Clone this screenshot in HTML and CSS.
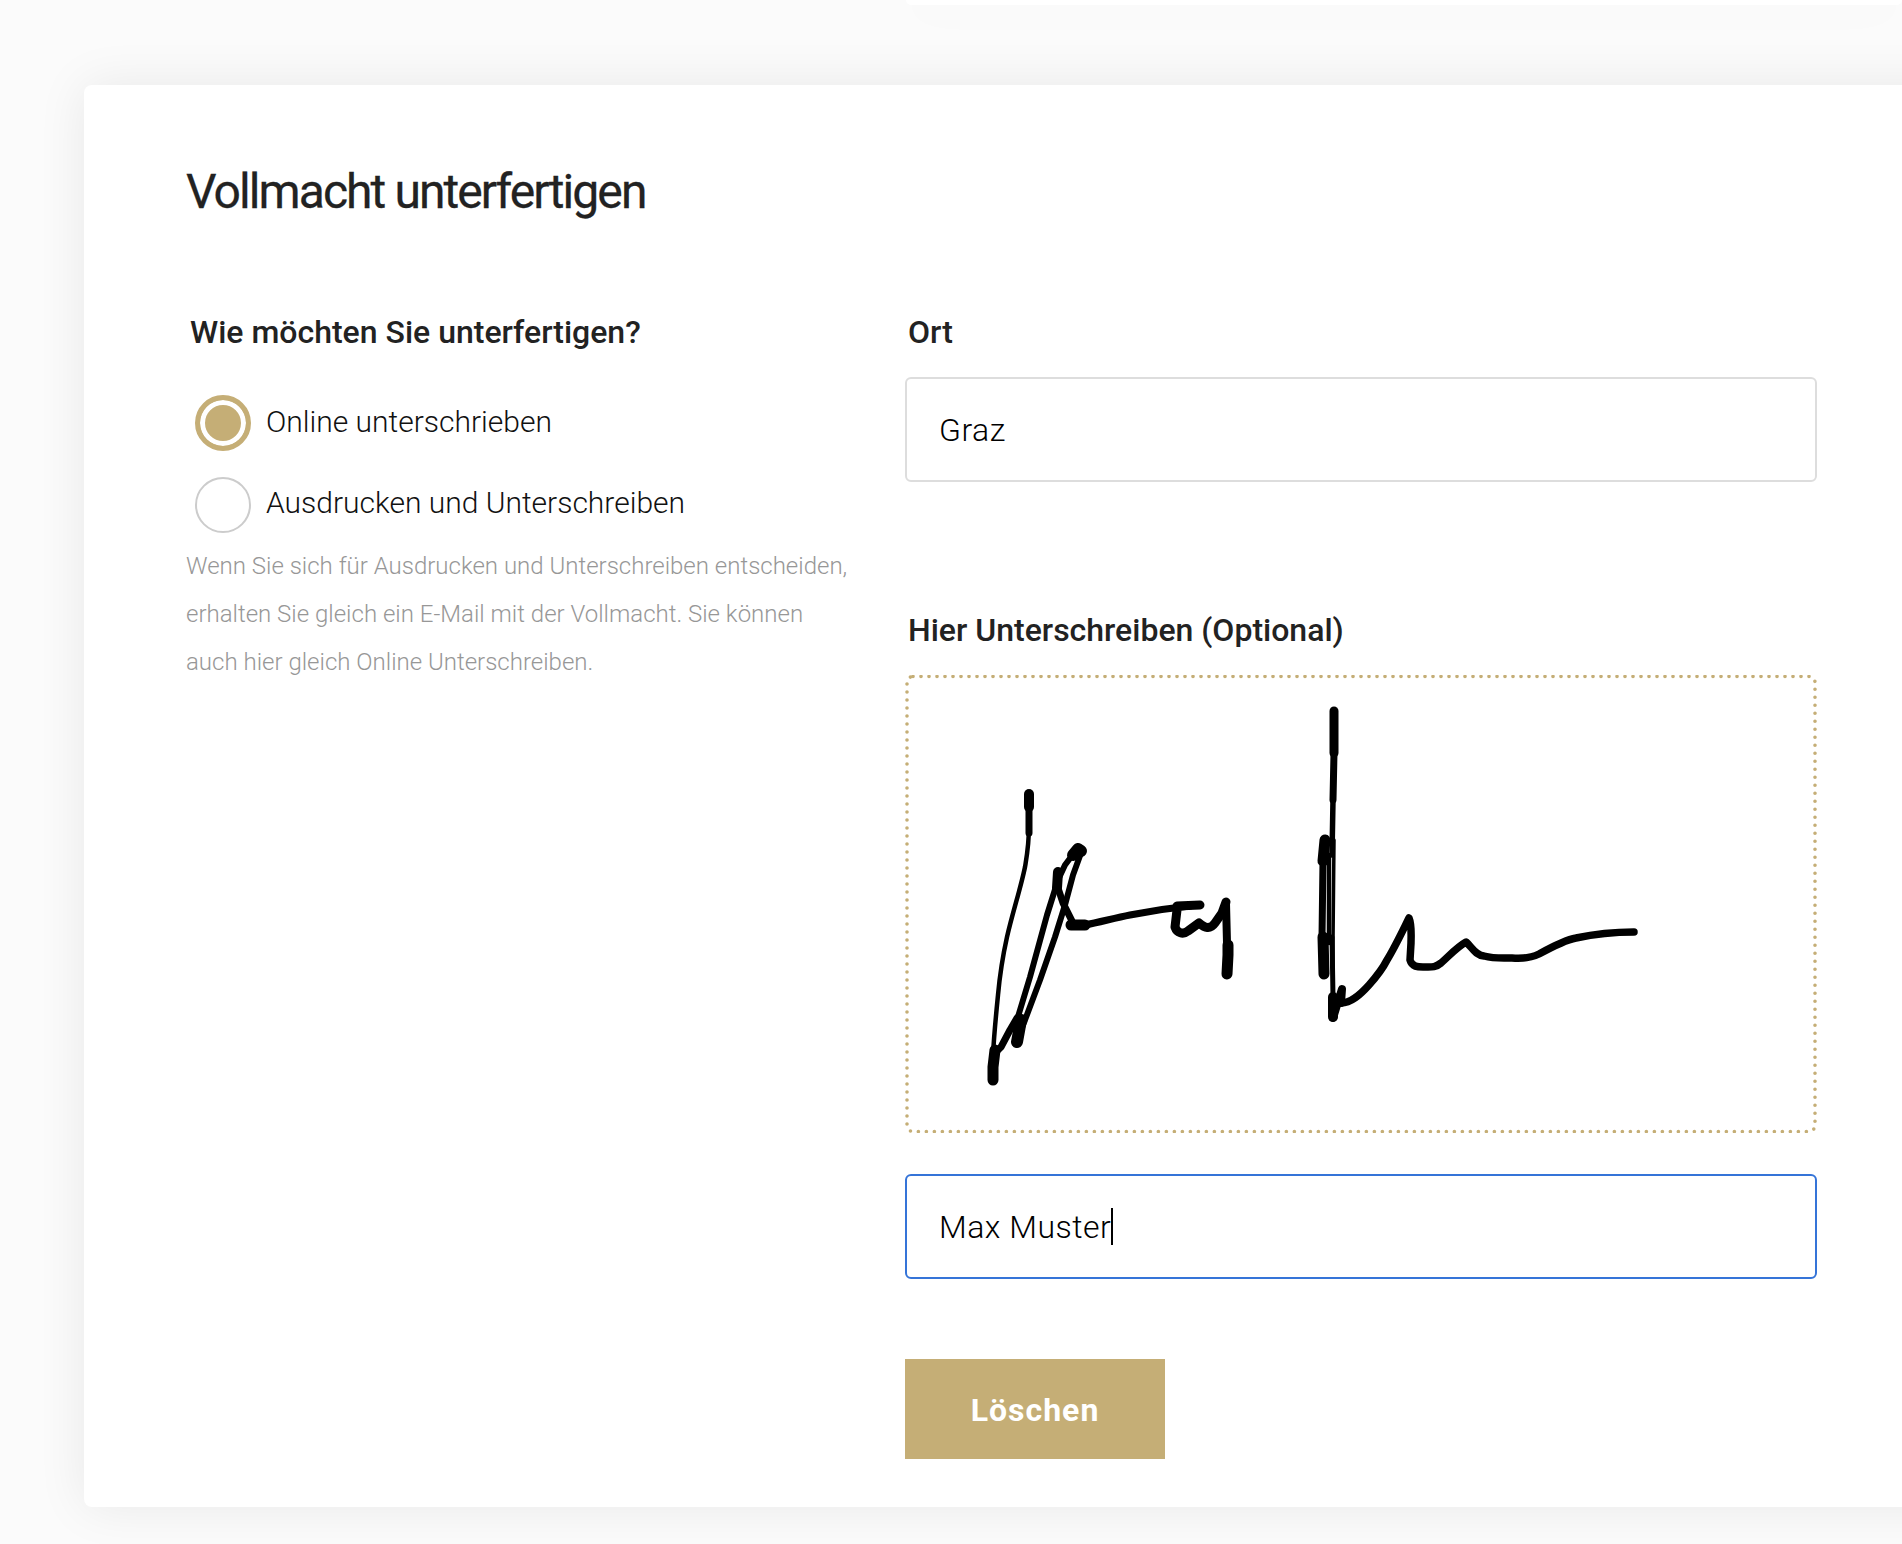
FILE: index.html
```html
<html>
	<head>
		<title>Vollmacht unterfertigen</title>
		<link rel="stylesheet" href="styles.css">
	</head>
	<body>
		<div class="top-card"></div>
		<div class="card">
			<h1 class="card-title">Vollmacht unterfertigen</h1>
			<div class="form-grid">
				<div class="form-left">
					<div class="label label-left">Wie möchten Sie unterfertigen?</div>
					<div class="radio-row">
						<span class="radio radio-on"></span>
						<span class="radio-text">Online unterschrieben</span>
					</div>
					<div class="radio-row radio-row-2">
						<span class="radio"></span>
						<span class="radio-text">Ausdrucken und Unterschreiben</span>
					</div>
					<p class="hint">Wenn Sie sich für Ausdrucken und Unterschreiben entscheiden, erhalten Sie gleich ein E-Mail mit der Vollmacht. Sie können auch hier gleich Online Unterschreiben.</p>
				</div>
				<div class="form-right">
					<div class="label">Ort</div>
					<div class="field">Graz</div>
					<div class="label label-sign">Hier Unterschreiben (Optional)</div>
					<div class="sign-box">
						<svg class="sign-svg" viewBox="0 0 912 458" width="912" height="458">
							<rect class="sign-border" x="2" y="1.5" width="908" height="455" rx="6"/>
							<g class="sign-ink">
								<path stroke-width="4.5" d="M124 150 C124 170 122 180 120 192 C116 212 108 236 102 262 C98 280 95 298 93 320 C91 340 89 360 88 380"/>
								<path stroke-width="10" d="M124 119 L124 132"/>
								<path stroke-width="7" d="M124 132 L124 158"/>
								<path stroke-width="11" d="M90 375 L88 392 L88 405"/>
								<path stroke-width="7" d="M90 378 L96 372 L105 355 L112 343"/>
								<path stroke-width="6" d="M113 362 L120 345 L135 305 L150 262 L160 230 L168 200 L176 178"/>
								<path stroke-width="12" d="M176 176 L173 174 L168 180"/>
								<path stroke-width="6" d="M169 178 L160 190 L153 205 L142 240 L125 302 L112 345"/>
								<path stroke-width="12" d="M116 345 L112 367"/>
								<path stroke-width="10" d="M153 197 L152 213"/>
								<path stroke-width="7" d="M152 210 L158 228 L167 246"/>
								<path stroke-width="11" d="M166 250 L180 250"/>
								<path stroke-width="7" d="M180 250 C195 247 210 243 225 240 C245 236 265 233 285 231"/>
								<path stroke-width="9" d="M272 231 L295 230 M272 235 L270 252 C272 258 278 260 283 256 L294 248 C300 253 305 255 310 248 L317 238 L321 227"/>
								<path stroke-width="8" d="M321 228 L322 268"/>
								<path stroke-width="11" d="M323 270 L323 280 L322 299"/>
								<path stroke-width="9" d="M429 36 L429 78"/>
								<path stroke-width="7" d="M429 78 L428 125"/>
								<path stroke-width="5.5" d="M428 125 L427 180"/>
								<path stroke-width="3.5" d="M429 165 L428 268 L428 320"/>
								<path stroke-width="4.5" d="M424 180 L424 268"/>
								<path stroke-width="11" d="M420 165 L418 186"/>
								<path stroke-width="7" d="M418 186 L417 262"/>
								<path stroke-width="11" d="M418 262 L419 299"/>
								<path stroke-width="5" d="M427 262 L428 322"/>
								<path stroke-width="10" d="M428 322 L428 342"/>
								<path stroke-width="8" d="M428 343 L437 314 L436 328"/>
								<path stroke-width="7.5" d="M436 328 C446 328 455 320 464 310 C472 301 478 293 482 285 C490 272 498 255 504 243 C507 250 506 262 506 268 L505 285 C507 292 513 292 518 292 C526 292 530 293 536 288 C544 281 552 272 561 267 C567 272 570 280 579 281 C590 284 600 283 607 283 C620 284 628 282 634 279 C645 273 660 265 671 263 C685 260 705 257 729 257"/>
							</g>
						</svg>
					</div>
					<div class="field field-focus">Max Muster<span class="caret"></span></div>
					<div class="button">Löschen</div>
				</div>
			</div>
		</div>
	</body>
</html>
```

FILE: styles.css
```css
html, body {
	margin: 0;
	height: 1544px;
	overflow: hidden;
}
body {
	background-color: #fbfbfb;
	font-family: Roboto, sans-serif;
	color: #222;
}
.top-card {
	height: 5px;
	margin-left: 906px;
	background-color: #fff;
	border-radius: 0 0 8px 8px;
	box-shadow: 0 0 50px rgba(0, 0, 0, 0.08);
}
.card {
	width: 1900px;
	box-sizing: border-box;
	margin: 80px 0 0 84px;
	padding: 79px 0 48px 103px;
	background-color: #fff;
	border-radius: 8px;
	box-shadow: 0 0 50px rgba(0, 0, 0, 0.08);
}
.card-title {
	margin: 0 0 94px -1px;
	font-size: 48px;
	line-height: 56px;
	font-weight: 400;
	letter-spacing: -1.92px;
	-webkit-text-stroke: 0.3px #222;
}
.form-grid {
	display: grid;
	grid-template-columns: 718px 912px;
}
.label {
	margin-left: 3px;
	padding-top: 1px;
	font-size: 32px;
	line-height: 35px;
	font-weight: 500;
}
.label-left {
	margin-left: 3px;
	margin-bottom: 45px;
}
.label-sign {
	margin-top: 130px;
}
.radio-row {
	display: flex;
	align-items: center;
	gap: 15px;
	margin-left: 8px;
}
.radio-row-2 {
	margin-top: 26px;
}
.radio {
	width: 56px;
	height: 56px;
	box-sizing: border-box;
	border: 2px solid #ccc;
	border-radius: 50%;
}
.radio-on {
	border: 5px solid #c5ae76;
	background-color: #c5ae76;
	box-shadow: inset 0 0 0 5px #fff;
}
.radio-text {
	padding-bottom: 4px;
	font-size: 30px;
	font-weight: 300;
	color: #111;
}
.radio-row-2 .radio-text {
	padding-bottom: 6px;
}
.hint {
	width: 665px;
	margin: 9px 0 0 -1px;
	font-size: 24px;
	line-height: 48px;
	font-weight: 300;
	color: #979797;
}
.field {
	display: flex;
	align-items: center;
	height: 105px;
	box-sizing: border-box;
	margin-top: 27px;
	padding: 0 32px;
	background-color: #fff;
	border: 2px solid #ddd;
	border-radius: 6px;
	font-size: 32px;
	font-weight: 300;
	letter-spacing: 0.5px;
	color: #000;
}
.field-focus {
	margin-top: 41px;
	border-color: #3574d8;
}
.caret {
	width: 2px;
	height: 37px;
	background-color: #000;
}
.sign-box {
	margin-top: 27px;
	height: 458px;
}
.sign-svg {
	display: block;
}
.sign-border {
	fill: none;
	stroke: #c5ae76;
	stroke-width: 3.6;
	stroke-linecap: round;
	stroke-dasharray: 0 8;
}
.sign-ink {
	fill: none;
	stroke: #000;
	stroke-linecap: round;
	stroke-linejoin: round;
	filter: blur(0.6px);
}
.button {
	display: flex;
	align-items: center;
	justify-content: center;
	width: 260px;
	height: 98px;
	padding-top: 2px;
	margin-top: 80px;
	background-color: #c5ae76;
	color: #fff;
	font-size: 32px;
	font-weight: 700;
	letter-spacing: 1px;
}
```
